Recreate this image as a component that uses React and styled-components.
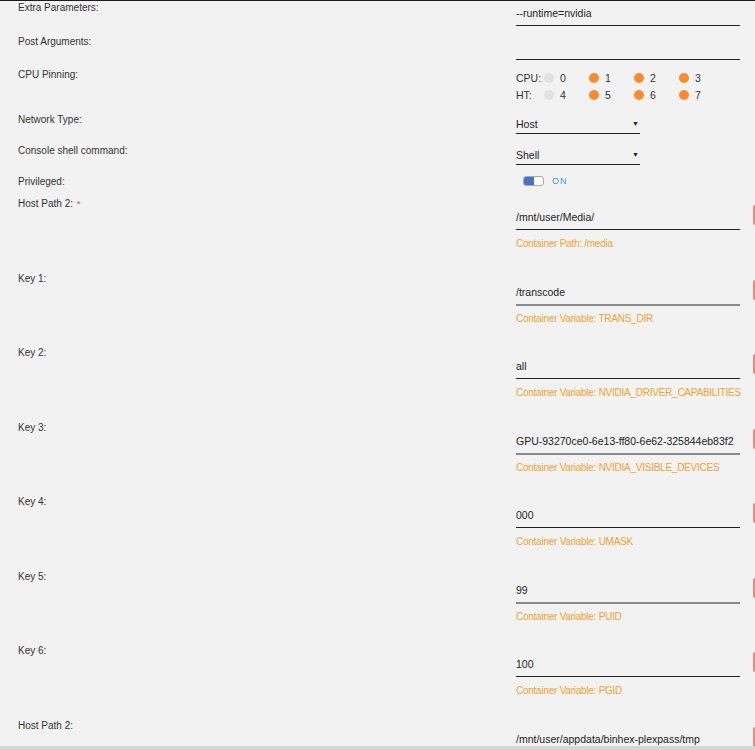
import React from "react";
import styled, { createGlobalStyle } from "styled-components";

const Global = createGlobalStyle`
  html, body {
    margin: 0;
    overflow: hidden;
    background: #f2f2f2;
  }
  body {
    font-family: "Liberation Sans", Arial, sans-serif;
  }
`;

const Page = styled.div`
  width: 755px;
  height: 750px;
  display: flex;
  flex-direction: column;
  box-sizing: border-box;
  border-top: 1px solid #1c1c1c;
  background: #f2f2f2;
  overflow: hidden;
`;

const Form = styled.div`
  flex: 1;
  overflow: hidden;
`;

const Footer = styled.div`
  height: 4px;
  background: #d6d6d6;
`;

const Row = styled.div`
  display: grid;
  grid-template-columns: 498px 224px 33px;
  padding-left: 18px;
  height: ${(p) => p.$h}px;
`;

const Label = styled.div`
  font-size: 10px;
  line-height: 14px;
  color: #333;
  white-space: nowrap;
`;

const Required = styled.span`
  color: #e0474c;
  margin-left: 4px;
  font-size: 9px;
  vertical-align: top;
`;

const Cell = styled.div`
  min-width: 0;
`;

const TextField = styled.div`
  margin-top: ${(p) => p.$top}px;
  height: 14px;
  line-height: 14px;
  padding-bottom: 5px;
  font-size: 10.5px;
  color: #222;
  white-space: nowrap;
  border-bottom: ${(p) => (p.$muted ? "2px solid #8a8a8a" : "1px solid #222")};
`;

const Hint = styled.div`
  margin-top: ${(p) => (p.$muted ? 6 : 7)}px;
  font-size: 10px;
  line-height: 14px;
  color: #f0a232;
  white-space: nowrap;
  letter-spacing: -0.25px;
`;

const Select = styled.div`
  margin-top: 4px;
  width: 124px;
  height: 14px;
  line-height: 14px;
  padding-bottom: 2px;
  display: flex;
  justify-content: space-between;
  align-items: center;
  font-size: 10.5px;
  color: #222;
  border-bottom: 1px solid #222;
`;

const Caret = styled.span`
  font-size: 7px;
  margin-right: 1px;
  color: #222;
`;

const CpuGrid = styled.div`
  margin-top: 1px;
  display: grid;
  grid-template-columns: 28px repeat(4, 45px);
  grid-auto-rows: 17px;
  align-items: center;
  font-size: 10.5px;
  color: #333;
`;

const Core = styled.div`
  display: flex;
  align-items: center;
  gap: 6px;
`;

const Dot = styled.span`
  width: 10px;
  height: 10px;
  border-radius: 50%;
  background: ${(p) => (p.$on ? "#fd8b2d" : "#e1e1e1")};
`;

const SwitchRow = styled.div`
  margin-top: 1px;
  margin-left: 7px;
  display: flex;
  align-items: center;
  gap: 8px;
`;

const Switch = styled.div`
  width: 21px;
  height: 10px;
  box-sizing: border-box;
  border: 1px solid #a9a9a9;
  border-radius: 3px;
  background: linear-gradient(to right, #4a72c4 0 55%, #fff 55% 100%);
`;

const SwitchText = styled.span`
  font-size: 9px;
  letter-spacing: 1px;
  color: #3d9ad8;
`;

const Remove = styled.div`
  margin: 8px 0 0 13px;
  width: 20px;
  height: 20px;
  border-radius: 2px;
  background: #ea8a8d;
`;

const cores = [
  { label: "CPU:", ids: [0, 1, 2, 3] },
  { label: "HT:", ids: [4, 5, 6, 7] },
];

const mappings = [
  { label: "Host Path 2:", required: true, value: "/mnt/user/Media/", hint: "Container Path: /media" },
  { label: "Key 1:", value: "/transcode", hint: "Container Variable: TRANS_DIR" },
  { label: "Key 2:", value: "all", hint: "Container Variable: NVIDIA_DRIVER_CAPABILITIES" },
  { label: "Key 3:", value: "GPU-93270ce0-6e13-ff80-6e62-325844eb83f2", hint: "Container Variable: NVIDIA_VISIBLE_DEVICES" },
  { label: "Key 4:", value: "000", hint: "Container Variable: UMASK" },
  { label: "Key 5:", value: "99", hint: "Container Variable: PUID" },
  { label: "Key 6:", value: "100", hint: "Container Variable: PGID" },
  { label: "Host Path 2:", value: "/mnt/user/appdata/binhex-plexpass/tmp" },
];

export default function App() {
  return (
    <Page>
      <Global />
      <Form>
        <Row $h={34}>
          <Label>Extra Parameters:</Label>
          <Cell>
            <TextField $top={5}>--runtime=nvidia</TextField>
          </Cell>
        </Row>
        <Row $h={33}>
          <Label>Post Arguments:</Label>
          <Cell>
            <TextField $top={5} />
          </Cell>
        </Row>
        <Row $h={45}>
          <Label>CPU Pinning:</Label>
          <Cell>
            <CpuGrid>
              {cores.map((c) => (
                <React.Fragment key={c.label}>
                  <span>{c.label}</span>
                  {c.ids.map((id) => (
                    <Core key={id}>
                      <Dot $on={id % 4 !== 0} />
                      {id}
                    </Core>
                  ))}
                </React.Fragment>
              ))}
            </CpuGrid>
          </Cell>
        </Row>
        <Row $h={31}>
          <Label>Network Type:</Label>
          <Cell>
            <Select>
              Host<Caret>▼</Caret>
            </Select>
          </Cell>
        </Row>
        <Row $h={31}>
          <Label>Console shell command:</Label>
          <Cell>
            <Select>
              Shell<Caret>▼</Caret>
            </Select>
          </Cell>
        </Row>
        <Row $h={22}>
          <Label>Privileged:</Label>
          <Cell>
            <SwitchRow>
              <Switch />
              <SwitchText>ON</SwitchText>
            </SwitchRow>
          </Cell>
        </Row>
        {mappings.map((m, i) => (
          <Row $h={74.5} key={i}>
            <Label>
              {m.label}
              {m.required && <Required>*</Required>}
            </Label>
            <Cell>
              <TextField $top={13} $muted={i % 2 === 1}>
                {m.value}
              </TextField>
              {m.hint && <Hint $muted={i % 2 === 1}>{m.hint}</Hint>}
            </Cell>
            <Remove />
          </Row>
        ))}
      </Form>
      <Footer />
    </Page>
  );
}
